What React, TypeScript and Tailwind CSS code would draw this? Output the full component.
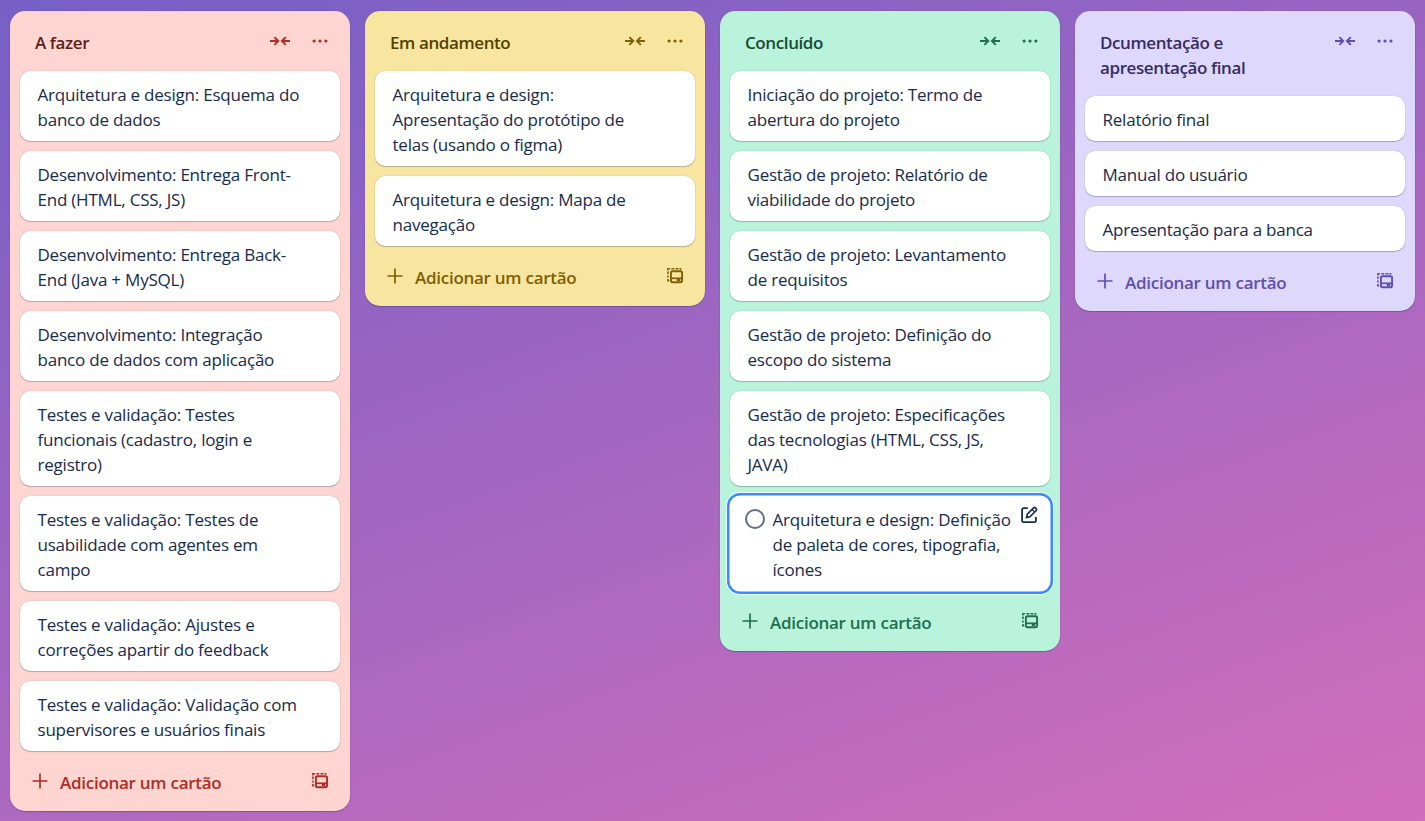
import type { ReactNode } from "react";

type Theme = { panel: string; title: string; action: string };

type Column = {
  title: string[];
  theme: Theme;
  cards: string[][];
  active?: string[];
};

const columns: Column[] = [
  {
    title: ["A fazer"],
    theme: { panel: "bg-[#FFD5D2]", title: "text-[#5D1F1A]", action: "text-[#AE2E24]" },
    cards: [
      ["Arquitetura e design: Esquema do", "banco de dados"],
      ["Desenvolvimento: Entrega Front-", "End (HTML, CSS, JS)"],
      ["Desenvolvimento: Entrega Back-", "End (Java + MySQL)"],
      ["Desenvolvimento: Integração", "banco de dados com aplicação"],
      ["Testes e validação: Testes", "funcionais (cadastro, login e", "registro)"],
      ["Testes e validação: Testes de", "usabilidade com agentes em", "campo"],
      ["Testes e validação: Ajustes e", "correções apartir do feedback"],
      ["Testes e validação: Validação com", "supervisores e usuários finais"],
    ],
  },
  {
    title: ["Em andamento"],
    theme: { panel: "bg-[#F8E6A0]", title: "text-[#533F04]", action: "text-[#7F5F01]" },
    cards: [
      ["Arquitetura e design:", "Apresentação do protótipo de", "telas (usando o figma)"],
      ["Arquitetura e design: Mapa de", "navegação"],
    ],
  },
  {
    title: ["Concluído"],
    theme: { panel: "bg-[#BAF3DB]", title: "text-[#164B35]", action: "text-[#216E4E]" },
    cards: [
      ["Iniciação do projeto: Termo de", "abertura do projeto"],
      ["Gestão de projeto: Relatório de", "viabilidade do projeto"],
      ["Gestão de projeto: Levantamento", "de requisitos"],
      ["Gestão de projeto: Definição do", "escopo do sistema"],
      ["Gestão de projeto: Especificações", "das tecnologias (HTML, CSS, JS,", "JAVA)"],
    ],
    active: ["Arquitetura e design: Definição", "de paleta de cores, tipografia,", "ícones"],
  },
  {
    title: ["Dcumentação e", "apresentação final"],
    theme: { panel: "bg-[#DFD8FD]", title: "text-[#352C63]", action: "text-[#5E4DB2]" },
    cards: [["Relatório final"], ["Manual do usuário"], ["Apresentação para a banca"]],
  },
];

function Icon({ children }: { children: ReactNode }) {
  return (
    <svg viewBox="0 0 20 20" className="block size-5 shrink-0" fill="none" stroke="currentColor">
      {children}
    </svg>
  );
}

function CollapseIcon() {
  return (
    <Icon>
      <path d="M0 10H8.3M4.4 6.1L8.3 10L4.4 13.9M20 10H11.9M15.8 6.1L11.9 10L15.8 13.9" strokeWidth="1.9" />
    </Icon>
  );
}

function MoreIcon() {
  return (
    <Icon>
      <g fill="currentColor" stroke="none">
        <circle cx="4.1" cy="10" r="1.6" />
        <circle cx="10" cy="10" r="1.6" />
        <circle cx="15.9" cy="10" r="1.6" />
      </g>
    </Icon>
  );
}

function PlusIcon() {
  return (
    <Icon>
      <path d="M10 2.5V17.5M2.5 10H17.5" strokeWidth="1.7" />
    </Icon>
  );
}

function TemplateIcon() {
  return (
    <Icon>
      <rect x="5.9" y="5.3" width="11.2" height="10.9" rx="1.6" strokeWidth="1.9" />
      <path d="M5.9 12.3H17.1" strokeWidth="1.7" />
      <path d="M11.8 12.6H15.2V15H11.8Z" fill="currentColor" stroke="none" />
      <path
        d="M4.2 14.8H2.9V13M2.9 11.6V9.4M2.9 7.9V5.6M2.9 4.5V2.8H4.9M6.3 2.8H9.3M10.5 2.8H13.4"
        strokeWidth="1.6"
      />
      <path d="M14.4 2.8H15.6V3.8" strokeWidth="1.4" />
    </Icon>
  );
}

function EditIcon() {
  return (
    <Icon>
      <path d="M8.8 3.2H4.6Q3.1 3.2 3.1 4.7V15.7Q3.1 17.2 4.6 17.2H15.4Q16.9 17.2 16.9 15.7V12" strokeWidth="1.8" />
      <path d="M7.6 12.6L8.3 9.2L14.6 2.9Q15.5 2.1 16.4 2.9L17.2 3.7Q18 4.6 17.2 5.5L10.9 11.8Z" strokeWidth="1.7" />
      <path d="M13.2 4.5L15.6 6.9" strokeWidth="1.3" />
    </Icon>
  );
}

function Lines({ lines }: { lines: string[] }) {
  return (
    <>
      {lines.map((line) => (
        <span key={line} className="block whitespace-nowrap">
          {line}
        </span>
      ))}
    </>
  );
}

function ListColumn({ title, theme, cards, active }: Column) {
  return (
    <section
      className={`w-[340px] shrink-0 rounded-[15px] px-2.5 pb-2.5 shadow-[0_1px_1px_#091E4240,0_0_1px_#091E424F] ${theme.panel}`}
    >
      <header className="flex justify-between pt-[19px] pb-4 pl-[15px]">
        <h2 className={`text-[17px] leading-[25px] font-semibold tracking-[-0.4px] ${theme.title}`}>
          <Lines lines={title} />
        </h2>
        <div className={`flex gap-5 pt-px pr-2.5 ${theme.action}`}>
          <CollapseIcon />
          <MoreIcon />
        </div>
      </header>
      <div className="flex flex-col gap-2.5 text-[17px] leading-[25px] tracking-[-0.22px] text-[#172B4D]">
        {cards.map((card) => (
          <article
            key={card.join(" ")}
            className="rounded-[10px] bg-white pt-[11px] pr-4 pb-[9px] pl-[17.5px] shadow-[0_1px_1px_#091E4240,0_0_1px_#091E424F]"
          >
            <Lines lines={card} />
          </article>
        ))}
        {active && (
          <article className="flex rounded-[10px] bg-white pt-[11px] pr-[11px] pb-[9px] pl-[15px] shadow-[0_0_0_0.5px_#ffffff,0_0_0_3px_#388BFF,0_0_0_4px_#ffffffb0]">
            <span className="mt-0.5 mr-[7.5px] size-5 shrink-0 rounded-full border-2 border-[#626F86]" />
            <div className="flex-1">
              <Lines lines={active} />
            </div>
            <div className="-mt-0.5">
              <EditIcon />
            </div>
          </article>
        )}
      </div>
      <footer className={`flex h-[50px] items-start pt-5 pr-2.5 pl-2.5 ${theme.action}`}>
        <PlusIcon />
        <span className="-mt-px ml-2.5 flex-1 text-[17px] leading-[25px] font-semibold tracking-[-0.27px]">
          Adicionar um cartão
        </span>
        <TemplateIcon />
      </footer>
    </section>
  );
}

export default function App() {
  return (
    <main className="flex h-[821px] w-[1425px] items-start gap-[15px] overflow-hidden bg-[linear-gradient(160deg,#755FC6_0%,#D26EBB_100%)] px-2.5 pt-[11px] font-['Open_Sans','Noto_Sans',sans-serif]">
      {columns.map((column) => (
        <ListColumn key={column.title[0]} {...column} />
      ))}
    </main>
  );
}
